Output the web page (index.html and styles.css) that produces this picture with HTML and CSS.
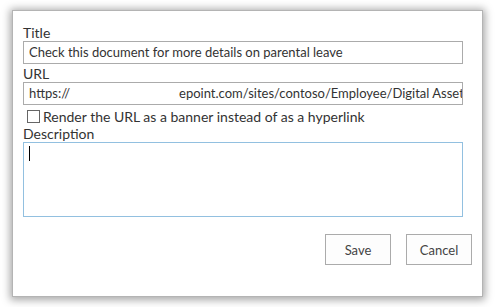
FILE: index.html
```html
<!DOCTYPE html>
<html>
<head>
    <title>Edit link</title>
    <link rel="stylesheet" href="styles.css">
</head>
<body>
    <div class="dialog">
        <div class="field">
            <label class="field-label">Title</label>
            <div class="text-box">Check this document for more details on parental leave</div>
        </div>

        <div class="field">
            <label class="field-label">URL</label>
            <div class="text-box url-box"><span>https://</span><span class="hidden-part"></span><span>epoint.com/sites/contoso/Employee/Digital Assets/Parental-Leave.docx</span></div>
        </div>

        <div class="check-row">
            <span class="check-box"></span>
            <span>Render the URL as a banner instead of as a hyperlink</span>
        </div>

        <div class="field">
            <label class="field-label">Description</label>
            <div class="text-area"><span class="caret"></span></div>
        </div>

        <div class="actions">
            <button class="btn">Save</button>
            <button class="btn">Cancel</button>
        </div>
    </div>
</body>
</html>
```

FILE: styles.css
```css
* {
    box-sizing: border-box;
}

body {
    margin: 0;
    padding: 10px 12px;
    background: #fff;
    font-family: 'Lato', sans-serif;
    color: #333;
}

.dialog {
    width: 471px;
    height: 287px;
    background: #fff;
    border: 1px solid #b4b4b4;
    box-shadow: 0 1px 8px 2px rgba(0, 0, 0, 0.35);
    padding: 14px 10px 0 10px;
}

.field-label {
    display: block;
    font-size: 14px;
    line-height: 16px;
    height: 16px;
}

.text-box {
    width: 440px;
    height: 23px;
    border: 1px solid #ababab;
    font-size: 13px;
    line-height: 21px;
    padding: 0 5px;
    white-space: nowrap;
    overflow: hidden;
    margin-bottom: 2px;
}

.hidden-part {
    display: inline-block;
    width: 109px;
}

.check-row {
    display: flex;
    align-items: center;
    height: 19px;
    font-size: 14px;
    padding-left: 4px;
}

.check-box {
    width: 13px;
    height: 13px;
    border: 1px solid #666;
    margin-right: 3px;
}

.text-area {
    width: 440px;
    height: 75px;
    border: 1px solid #92c0e0;
    padding: 3px 5px;
}

.caret {
    display: block;
    width: 1px;
    height: 15px;
    background: #000;
}

.actions {
    display: flex;
    justify-content: flex-end;
    gap: 15px;
    margin-top: 17px;
}

.btn {
    width: 66px;
    height: 31px;
    background: #fdfdfd;
    border: 1px solid #ababab;
    font-family: 'Lato', sans-serif;
    font-size: 13px;
    color: #444;
    padding: 0;
}
```
